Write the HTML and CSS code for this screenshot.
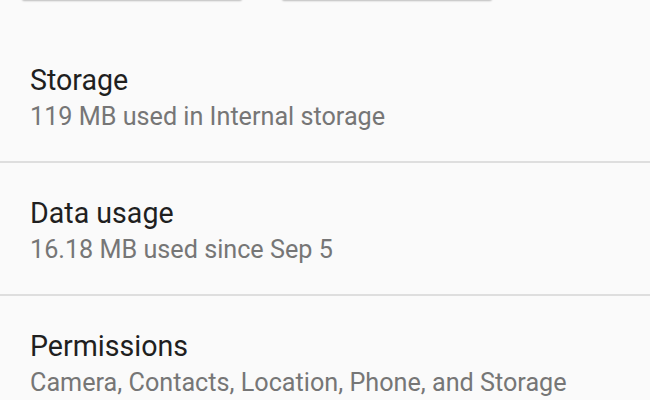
FILE: index.html
```html
<!DOCTYPE html>
<html>
<head>
<meta charset="utf-8">
<link rel="stylesheet" href="styles.css">
</head>
<body>
<div class="page">
  <div class="top">
    <div class="buttons">
      <div class="btn btn-left"></div>
      <div class="btn btn-right"></div>
    </div>
  </div>
  <div class="item">
    <div class="title">Storage</div>
    <div class="summary">119 MB used in Internal storage</div>
  </div>
  <div class="divider"></div>
  <div class="item">
    <div class="title">Data usage</div>
    <div class="summary">16.18 MB used since Sep 5</div>
  </div>
  <div class="divider"></div>
  <div class="item">
    <div class="title">Permissions</div>
    <div class="summary">Camera, Contacts, Location, Phone, and Storage</div>
  </div>
</div>
</body>
</html>
```

FILE: styles.css
```css
html, body {
  margin: 0;
  padding: 0;
  background: #fafafa;
  overflow: hidden;
}
.page {
  width: 650px;
  height: 400px;
  overflow: hidden;
  font-family: Roboto, "Noto Sans", sans-serif;
}
.top {
  display: flow-root;
  height: 30px;
}
.buttons {
  display: flex;
  margin-top: -40px;
  padding-left: 22px;
  gap: 40px;
}
.btn {
  height: 40px;
  background: #f2f2f2;
  border-radius: 2px;
  box-shadow: 0 1px 2px rgba(0,0,0,0.25);
}
.btn-left { width: 220px; }
.btn-right { width: 210px; }
.item {
  height: 131px;
  box-sizing: border-box;
  padding: 33px 30px 0;
}
.title {
  font-size: 28.6px;
  line-height: 34px;
  color: #1f1f1f;
}
.summary {
  margin-top: 5px;
  font-size: 25.2px;
  line-height: 30px;
  color: #767676;
}
.divider {
  height: 2px;
  background: #dedede;
}
```
